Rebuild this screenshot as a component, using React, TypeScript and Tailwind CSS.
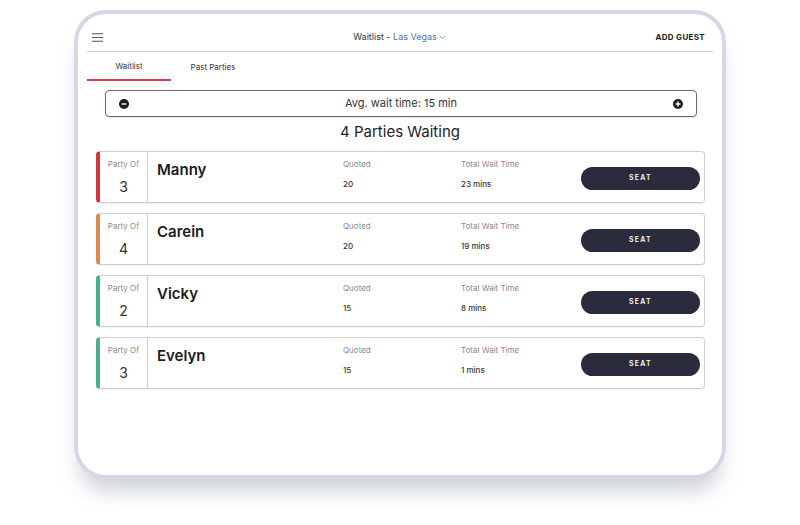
import { ChevronDown } from 'lucide-react'

const parties = [
  { name: 'Manny', size: 3, quoted: '20', wait: '23 mins', color: 'border-l-[#c93b3b]' },
  { name: 'Carein', size: 4, quoted: '20', wait: '19 mins', color: 'border-l-[#d98b54]' },
  { name: 'Vicky', size: 2, quoted: '15', wait: '8 mins', color: 'border-l-[#4fae88]' },
  { name: 'Evelyn', size: 3, quoted: '15', wait: '1 mins', color: 'border-l-[#4fae88]' },
]

function Hamburger() {
  return (
    <svg width="11" height="9" viewBox="0 0 11 9" className="text-[#555]">
      <path d="M0 0.75h11M0 4.5h11M0 8.25h11" stroke="currentColor" strokeWidth="1.1" />
    </svg>
  )
}

function CircleIcon({ plus }: { plus?: boolean }) {
  return (
    <svg width="10" height="10" viewBox="0 0 10 10">
      <circle cx="5" cy="5" r="5" fill="#1f1f1f" />
      <path d="M2.6 5h4.8" stroke="#fff" strokeWidth="1.4" />
      {plus && <path d="M5 2.6v4.8" stroke="#fff" strokeWidth="1.4" />}
    </svg>
  )
}

function PartyCard({ p }: { p: (typeof parties)[number] }) {
  return (
    <div className={`flex h-[52px] rounded-[4px] border border-[#cfcfd3] border-l-4 ${p.color} bg-white shadow-[0_1px_1px_rgba(0,0,0,0.06)]`}>
      <div className="flex w-[48px] flex-col items-center border-r border-[#cfcfd3] pt-[7px]">
        <span className="text-[8px] leading-[10px] text-[#8a8a8a]">Party Of</span>
        <span className="mt-[10px] text-[14px] leading-[16px] text-[#333]">{p.size}</span>
      </div>
      <div className="w-[195px] pl-[9px] pt-[9px]">
        <div className="text-[15px] font-semibold leading-[18px] text-[#1c1c1c]">{p.name}</div>
      </div>
      <div className="w-[118px] pt-[7px]">
        <div className="text-[8px] leading-[10px] text-[#8a8a8a]">Quoted</div>
        <div className="mt-[10px] text-[8px] font-medium leading-[10px] text-[#333]">{p.quoted}</div>
      </div>
      <div className="flex-1 pt-[7px]">
        <div className="text-[8px] leading-[10px] text-[#8a8a8a]">Total Wait Time</div>
        <div className="mt-[10px] text-[8px] font-medium leading-[10px] text-[#333]">{p.wait}</div>
      </div>
      <div className="flex items-center pr-[4px] pt-[2px]">
        <button className="h-[23px] w-[119px] rounded-full bg-[#2a2b3d] text-[7px] font-semibold tracking-[0.18em] text-white">
          SEAT
        </button>
      </div>
    </div>
  )
}

export default function App() {
  return (
    <div className="h-[525px] w-[800px] bg-white pt-[10px] font-['Inter',sans-serif]">
      <div className="ml-[74px] h-[469px] w-[652px] rounded-[32px] border-4 border-[#d6d7e3] bg-white shadow-[0_18px_20px_-6px_rgba(150,155,180,0.45)]">
        <header className="mx-[9px] flex items-center border-b border-[#c9c9cd] pb-[8px] pt-[17px]">
          <div className="flex w-[120px] pl-[5px]">
            <Hamburger />
          </div>
          <div className="flex flex-1 items-center justify-center text-[9px] leading-[12px] text-[#333]">
            Waitlist -&nbsp;<span className="text-[#3f76b0]">Las Vegas</span>
            <ChevronDown size={9} className="ml-[1px] text-[#3f76b0]" />
          </div>
          <div className="w-[120px] pr-[8px] text-right text-[8px] font-bold leading-[12px] tracking-[0.04em] text-[#222]">
            ADD GUEST
          </div>
        </header>

        <nav className="ml-[9px] flex">
          <div className="flex h-[29px] w-[84px] items-center justify-center border-b-2 border-[#d2414b] text-[8px] text-[#333]">
            Waitlist
          </div>
          <div className="flex h-[29px] w-[84px] items-center justify-center text-[8px] text-[#333]">
            Past Parties
          </div>
        </nav>

        <div className="ml-[27px] mr-[25px] mt-[9px] flex h-[27px] items-center justify-between rounded-[4px] border border-[#6a6a6a] px-[13px] shadow-[0_1px_2px_rgba(0,0,0,0.12)]">
          <CircleIcon />
          <span className="text-[11px] text-[#333]">Avg. wait time: 15 min</span>
          <CircleIcon plus />
        </div>

        <h2 className="mt-[6px] text-center text-[15px] leading-[18px] text-[#222]">4 Parties Waiting</h2>

        <div className="ml-[18px] mr-[17px] mt-[10px] flex flex-col gap-[10px]">
          {parties.map((p) => (
            <PartyCard key={p.name} p={p} />
          ))}
        </div>
      </div>
    </div>
  )
}
